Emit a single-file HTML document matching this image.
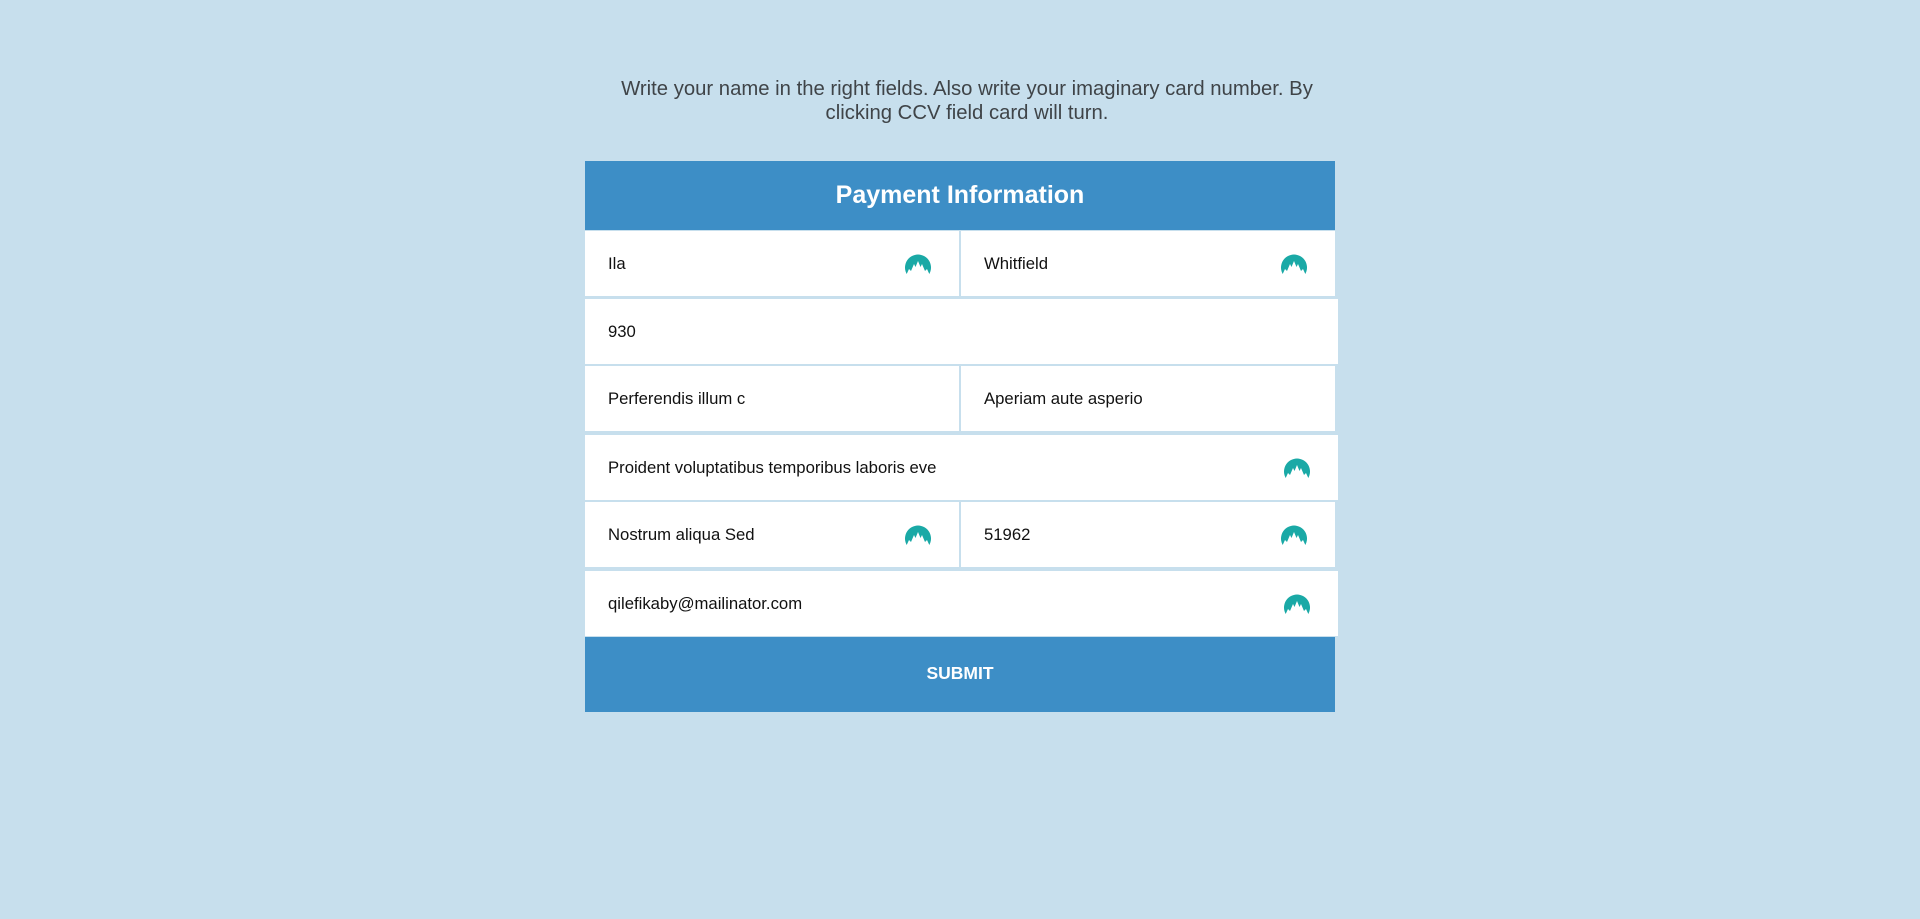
<!DOCTYPE html>
<html><head><meta charset="utf-8"><style>
body{margin:0;background:#c7dfed;font-family:"Liberation Sans",Arial,sans-serif;}
.w{position:relative;width:1920px;height:919px;overflow:hidden}
.intro{position:absolute;left:597px;width:740px;top:78px;text-align:center;color:#3f4448;font-size:20.3px;line-height:23.5px}
.hd{position:absolute;left:585px;top:161px;width:750px;height:69px;background:#3d8ec6;color:#fff;font-weight:bold;font-size:25px;text-align:center;line-height:69px}
.f{position:absolute;background:#fff;height:65px;line-height:65px;font-size:16.7px;color:#111;box-sizing:border-box;padding-left:23px}
.f svg{position:absolute;right:28px;top:23px}
.sub{position:absolute;left:585px;top:637px;width:750px;height:75px;background:#3d8ec6;color:#fff;font-weight:bold;font-size:17.5px;text-align:center;line-height:73px}
</style></head><body><div class="w">
<div class="intro">Write your name in the right fields. Also write your imaginary card number. By clicking CCV field card will turn.</div>
<div class="hd">Payment Information</div>
<svg width="0" height="0" style="position:absolute"><defs><symbol id="ic" viewBox="0 0 26 20"><path d="M1.2 19 A13 13 0 1 1 24.8 19 L24.3 20 L22 15 L20 17 L17 10 L15.5 13 L13 7 L10.5 13 L9 10 L6 17 L4 15 L1.7 20 Z" fill="#1aa9a6"/></symbol></defs></svg>
<div class="f" style="left:585px;top:231px;width:374px">Ila<svg width="26" height="20"><use href="#ic"/></svg></div>
<div class="f" style="left:961px;top:231px;width:374px">Whitfield<svg width="26" height="20"><use href="#ic"/></svg></div>
<div class="f" style="left:585px;top:299px;width:753px">930</div>
<div class="f" style="left:585px;top:366px;width:374px">Perferendis illum c</div>
<div class="f" style="left:961px;top:366px;width:374px">Aperiam aute asperio</div>
<div class="f" style="left:585px;top:435px;width:753px">Proident voluptatibus temporibus laboris eve<svg width="26" height="20"><use href="#ic"/></svg></div>
<div class="f" style="left:585px;top:502px;width:374px">Nostrum aliqua Sed<svg width="26" height="20"><use href="#ic"/></svg></div>
<div class="f" style="left:961px;top:502px;width:374px">51962<svg width="26" height="20"><use href="#ic"/></svg></div>
<div class="f" style="left:585px;top:571px;width:753px">qilefikaby@mailinator.com<svg width="26" height="20"><use href="#ic"/></svg></div>
<div class="sub">SUBMIT</div>
</div></body></html>
